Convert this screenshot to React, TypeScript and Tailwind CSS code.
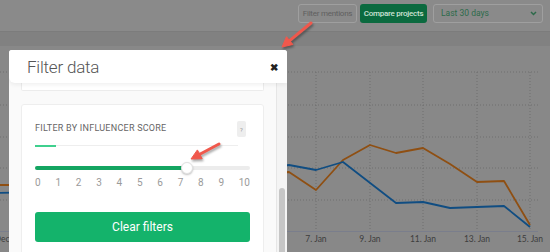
import React from "react";

const ticks = [0, 1, 2, 3, 4, 5, 6, 7, 8, 9, 10];

function Chart() {
  const grid = [73, 106, 138, 169, 201];
  const cols = [316, 370, 423, 477, 530];
  const labels: [number, string][] = [
    [-5, "26. Dec"],
    [316, "7. Jan"],
    [370, "9. Jan"],
    [423, "11. Jan"],
    [477, "13. Jan"],
    [530, "15. Jan"],
  ];
  return (
    <svg viewBox="0 47 550 205" className="block w-[550px] h-[205px]">
      {grid.map((y) => (
        <line key={y} x1="0" x2="538" y1={y} y2={y} stroke="#6f6f6f" strokeWidth="1" strokeDasharray="1 2" />
      ))}
      {cols.map((x) => (
        <line key={x} x1={x} x2={x} y1="73" y2="232" stroke="#6f6f6f" strokeWidth="1" strokeDasharray="1 2" />
      ))}
      <line x1="0" x2="538" y1="232.5" y2="232.5" stroke="#7a7e8c" strokeWidth="1" />
      {labels.map(([x, t]) => (
        <text key={t} x={x} y="243" textAnchor="middle" fontSize="8.5" fill="#3d3d3d" fontFamily="Lato, 'Liberation Sans', sans-serif">
          {t}
        </text>
      ))}
      <polyline
        fill="none"
        stroke="#8f4f12"
        strokeWidth="1.8"
        strokeLinejoin="round"
        points="-10,186 100,186 289,173 316,191 343,161 370,146 396,154 423,149 450,165 477,183 504,182 530,226"
      />
      <polyline
        fill="none"
        stroke="#104d82"
        strokeWidth="1.8"
        strokeLinejoin="round"
        points="-10,194 100,192 289,166 316,171 343,163 396,204 423,203 450,209 477,208 504,207 530,228"
      />
    </svg>
  );
}

function Arrows() {
  return (
    <svg viewBox="0 0 550 252" className="absolute inset-0 w-[550px] h-[252px] pointer-events-none drop-shadow-[1px_2px_1px_rgba(0,0,0,0.35)]">
      <g fill="#f0584c" stroke="#f0584c">
        <line x1="311" y1="23" x2="289.7" y2="40.6" strokeWidth="3" strokeLinecap="round" />
        <polygon points="282,47 292.9,44.5 286.5,36.7" strokeWidth="1" strokeLinejoin="round" />
        <line x1="219" y1="144" x2="199.8" y2="154.3" strokeWidth="3" strokeLinecap="round" />
        <polygon points="191,159 202.2,158.7 197.4,149.9" strokeWidth="1" strokeLinejoin="round" />
      </g>
    </svg>
  );
}

export default function App() {
  return (
    <div className="relative w-[550px] h-[252px] overflow-hidden bg-[#888888] font-['Roboto','Liberation_Sans',sans-serif]">
      {/* Top bar */}
      <div className="h-[32px] bg-[#8a8a8a] border-b border-[#7c7c7c] flex items-start justify-end gap-[3px] pt-[4px] pr-[7px]">
        <button className="h-[19px] w-[59px] px-0 border border-[#9f9f9f] rounded-[3px] text-[8px] tracking-[-0.25px] whitespace-nowrap text-[#5f5f5f] flex items-center justify-center">
          Filter mentions
        </button>
        <button className="h-[19px] w-[67px] px-0 bg-[#0b6a3f] rounded-[3px] text-[8px] tracking-[-0.25px] whitespace-nowrap font-medium text-[#cde2d5] flex items-center justify-center">
          Compare projects
        </button>
        <div className="ml-[3px] h-[19px] w-[110px] border border-[#9f9f9f] rounded-[3px] flex items-center justify-between pl-[7px] pr-[5px]">
          <span className="text-[8.5px] whitespace-nowrap text-[#2d6a4a]">Last 30 days</span>
          <svg width="7" height="5" viewBox="0 0 7 5">
            <polyline points="1,1 3.5,3.5 6,1" fill="none" stroke="#2d6a4a" strokeWidth="1.5" />
          </svg>
        </div>
      </div>
      <div className="h-[14px] bg-[#818181]" />
      <Chart />

      {/* Modal */}
      <div className="absolute left-[9px] top-[50px] w-[278px] h-[220px] bg-[#fafafa] rounded-t-[3px] flex flex-col overflow-hidden">
        <div className="relative z-10 h-[33px] shrink-0 bg-white rounded-bl-[6px] shadow-[0_2px_4px_rgba(0,0,0,0.06)] flex items-center justify-between pl-[18px] pr-[9px]">
          <span className="text-[17px] font-light text-[#555] tracking-[-0.2px] pt-[2px]">Filter data</span>
          <span className="text-[10px] font-bold text-[#222] leading-none pt-[3px]">✖</span>
        </div>
        <div className="flex flex-1">
          <div className="flex-1 px-[12px]">
            <div className="h-[8px] bg-white border-x border-b border-[#ececec] rounded-b-[2px]" />
            <div className="mt-[13px] bg-white border border-[#eeeeee] rounded-[3px] px-[13px] pt-[16px] pb-[20px]">
              <div className="flex items-center justify-between h-[16px] pr-[4px]">
                <span className="text-[9px] tracking-[0.25px] text-[#666]">FILTER BY INFLUENCER SCORE</span>
                <span className="w-[9px] h-[16px] bg-[#eeeeee] rounded-[2px] text-[6px] text-[#999] flex items-center justify-center">?</span>
              </div>
              <div className="mt-[8px] w-[203px] h-px bg-[#eeeeee]">
                <div className="w-[21px] h-[1.5px] bg-[#3fd08e]" />
              </div>
              <div className="relative mt-[20px] h-[4px] bg-[#ececec] rounded-full">
                <div className="h-[4px] w-[152px] bg-[#14a561] rounded-full" />
                <div className="absolute left-[146px] top-[-4px] w-[12px] h-[12px] rounded-full bg-white border border-[#e2e2e2] shadow-[0_1px_2px_rgba(0,0,0,0.25)]" />
              </div>
              <div className="mt-[7px] flex justify-between text-[10px] leading-[12px] text-[#9a9a9a]">
                {ticks.map((t) => (
                  <span key={t}>{t}</span>
                ))}
              </div>
              <button className="mt-[23px] w-full h-[30px] bg-[#14b36b] rounded-[3px] text-[12px] text-white">
                Clear filters
              </button>
            </div>
          </div>
          <div className="w-[11px] bg-[#f4f4f4] border-l border-[#e6e6e6] pt-[105px] pl-[2px]">
            <div className="w-[6px] h-[80px] bg-[#c6c6c6] rounded-full" />
          </div>
        </div>
      </div>

      <Arrows />
    </div>
  );
}
